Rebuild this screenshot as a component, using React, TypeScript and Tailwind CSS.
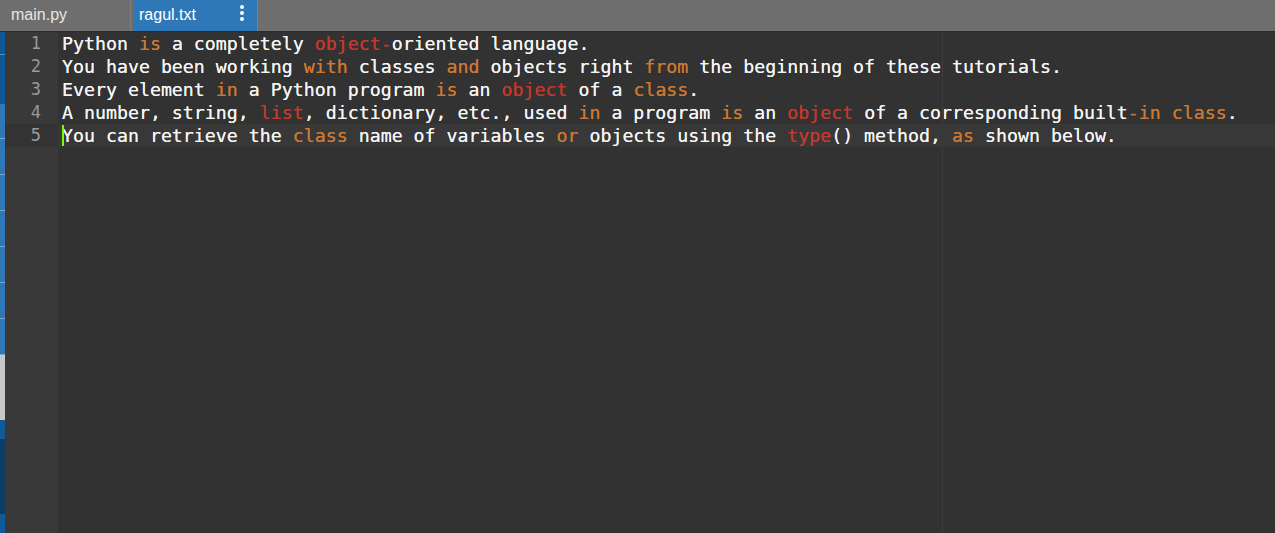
import React from 'react';

type Tok = [string, '' | 'k' | 'r'];

const lines: Tok[][] = [
    [['Python ', ''], ['is', 'k'], [' a completely ', ''], ['object-', 'r'], ['oriented language.', '']],
    [['You have been working ', ''], ['with', 'k'], [' classes ', ''], ['and', 'k'], [' objects right ', ''], ['from', 'k'], [' the beginning of these tutorials.', '']],
    [['Every element ', ''], ['in', 'k'], [' a Python program ', ''], ['is', 'k'], [' an ', ''], ['object', 'r'], [' of a ', ''], ['class', 'k'], ['.', '']],
    [['A number, string, ', ''], ['list', 'r'], [', dictionary, etc., used ', ''], ['in', 'k'], [' a program ', ''], ['is', 'k'], [' an ', ''], ['object', 'r'], [' of a corresponding built', ''], ['-in', 'k'], [' ', ''], ['class', 'k'], ['.', '']],
    [['You can retrieve the ', ''], ['class', 'k'], [' name of variables ', ''], ['or', 'k'], [' objects using the ', ''], ['type', 'r'], ['() method, ', ''], ['as', 'k'], [' shown below.', '']],
];

const tokClass = (k: Tok[1]) => (k === 'k' ? 'text-[#cc7832]' : k === 'r' ? 'text-[#c4392c]' : 'text-[#f4f4f4]');

const SideStrip = () => (
    <div className="flex flex-col w-[5px] shrink-0">
        <div className="h-[22px] bg-[#0f5897]" />
        <div className="h-px bg-[#5f8fb8]" />
        <div className="h-[49px] bg-[#0f5897]" />
        <div className="h-[34px] bg-[#2f77b6]" />
        {[0, 1, 2, 3, 4, 5].map((i) => (
            <React.Fragment key={i}>
                <div className="h-px bg-[#7ea7cc]" />
                <div className="h-[35px] bg-[#2f77b6]" />
            </React.Fragment>
        ))}
        <div className="h-px bg-[#7ea7cc]" />
        <div className="h-[65px] bg-[#c8c8c8]" />
        <div className="h-[19px] bg-[#115a99]" />
        <div className="h-[75px] bg-[#0e3c66]" />
        <div className="flex-1 bg-[#115a99]" />
    </div>
);

export default function App() {
    return (
        <div className="w-[1275px] h-[533px] flex flex-col bg-[#323232] overflow-hidden">
            <div className="h-[31px] shrink-0 flex bg-[#6e6e6e] font-['Liberation_Sans',Arial,sans-serif] text-[16px]">
                <div className="w-[130px] flex items-center pl-[11px] pb-[1px] text-[#e6e6e6]">main.py</div>
                <div className="w-px bg-[#7e7e7e]" />
                <div className="w-[2px]" />
                <div className="w-[124px] bg-[#2f78b8] flex items-center pl-[6px] pb-[1px] text-white relative">
                    ragul.txt
                    <div className="absolute left-[107px] top-[5px] flex flex-col gap-[2px]">
                        <span className="block w-[4px] h-[4px] rounded-full bg-white" />
                        <span className="block w-[4px] h-[4px] rounded-full bg-white" />
                        <span className="block w-[4px] h-[4px] rounded-full bg-white" />
                    </div>
                </div>
                <div className="w-px bg-[#808080]" />
            </div>
            <div className="h-px bg-[#2a2a2a] shrink-0" />
            <div className="flex-1 flex min-h-0">
                <SideStrip />
                <div className="w-[53px] shrink-0 bg-[#393939] font-['DejaVu_Sans_Mono',monospace] text-[17px] text-[#9a9a9a]">
                    {lines.map((_, i) => (
                        <div key={i} className={`h-[23px] leading-[23px] text-right pr-[17px] ${i === 4 ? 'bg-[#333333]' : ''}`}>
                            {i + 1}
                        </div>
                    ))}
                </div>
                <div className="flex-1 relative font-['DejaVu_Sans_Mono',monospace] text-[18.25px] whitespace-pre [text-shadow:0_0_0.4px_currentColor]">
                    <div className="absolute top-0 bottom-0 left-[884px] w-px bg-[#3d3d3d]" />
                    {lines.map((toks, i) => (
                        <div key={i} className={`relative h-[23px] leading-[23px] pl-[4px] ${i === 4 ? 'bg-[#383838]' : ''}`}>
                            {i === 4 && <span className="absolute left-[4px] top-[1px] w-[2px] h-[21px] bg-[#7cfc00]" />}
                            {toks.map(([t, k], j) => (
                                <span key={j} className={tokClass(k)}>{t}</span>
                            ))}
                        </div>
                    ))}
                </div>
            </div>
        </div>
    );
}
